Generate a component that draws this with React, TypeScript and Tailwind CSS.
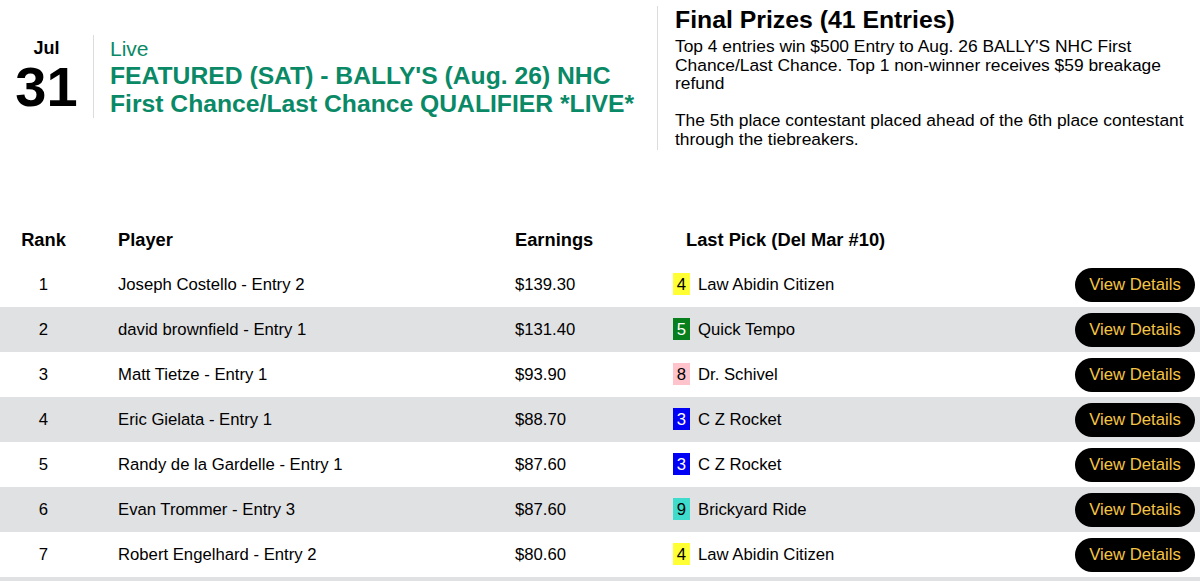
import React from "react";

interface Entry {
  rank: number;
  player: string;
  earnings: string;
  post: number;
  horse: string;
}

const entries: Entry[] = [
  { rank: 1, player: "Joseph Costello - Entry 2", earnings: "$139.30", post: 4, horse: "Law Abidin Citizen" },
  { rank: 2, player: "david brownfield - Entry 1", earnings: "$131.40", post: 5, horse: "Quick Tempo" },
  { rank: 3, player: "Matt Tietze - Entry 1", earnings: "$93.90", post: 8, horse: "Dr. Schivel" },
  { rank: 4, player: "Eric Gielata - Entry 1", earnings: "$88.70", post: 3, horse: "C Z Rocket" },
  { rank: 5, player: "Randy de la Gardelle - Entry 1", earnings: "$87.60", post: 3, horse: "C Z Rocket" },
  { rank: 6, player: "Evan Trommer - Entry 3", earnings: "$87.60", post: 9, horse: "Brickyard Ride" },
  { rank: 7, player: "Robert Engelhard - Entry 2", earnings: "$80.60", post: 4, horse: "Law Abidin Citizen" },
];

// saddle cloth colours by post position
const saddleCloth: Record<number, string> = {
  3: "bg-[#0000f5] text-white",
  4: "bg-[#ffff33] text-black",
  5: "bg-[#067f1c] text-white",
  8: "bg-[#ffc3cc] text-black",
  9: "bg-[#3fdccd] text-black",
};

const Row = ({ entry, striped }: { entry: Entry; striped: boolean }) => (
  <div
    className={`grid grid-cols-[87px_428px_158px_1fr_auto] items-center h-[45px] text-[16.7px] ${
      striped ? "bg-[#e0e1e3]" : "bg-white"
    }`}
  >
    <div className="text-center">{entry.rank}</div>
    <div className="pl-[31px]">{entry.player}</div>
    <div>{entry.earnings}</div>
    <div className="flex items-center">
      <span className={`flex items-center justify-center w-[17px] h-[22px] ${saddleCloth[entry.post]}`}>
        {entry.post}
      </span>
      <span className="ml-[8px]">{entry.horse}</span>
    </div>
    <div className="pr-[5px]">
      <button className="h-[34px] w-[120px] rounded-full bg-black text-[#f7c544] text-[16.7px]">
        View Details
      </button>
    </div>
  </div>
);

export default function App() {
  return (
    <div className="bg-white min-h-screen text-black font-['Liberation_Sans',Arial,sans-serif] pt-[6px] overflow-hidden">
      <div className="flex items-center">
        <div className="flex w-[657px] shrink-0 pb-[4px]">
          <div className="w-[93px] shrink-0 flex flex-col items-center pt-[3px]">
            <div className="text-[18px] leading-[21px] font-bold">Jul</div>
            <div className="text-[56px] leading-[56px] font-bold">31</div>
          </div>
          <div className="border-l border-[#dcdcdc] pl-[16px] pr-[16px] text-[#0a8966]">
            <div className="text-[21px] leading-[27px]">Live</div>
            <div className="text-[24.7px] leading-[28px] font-bold">
              FEATURED (SAT) - BALLY'S (Aug. 26) NHC First Chance/Last Chance QUALIFIER *LIVE*
            </div>
          </div>
        </div>
        <div className="flex-1 border-l border-[#dcdcdc] pl-[17px] pr-[10px] pb-[2px]">
          <h2 className="text-[24.8px] leading-[28px] font-bold">Final Prizes (41 Entries)</h2>
          <p className="mt-[3px] text-[17.4px] leading-[18.5px]">
            Top 4 entries win $500 Entry to Aug. 26 BALLY'S NHC First Chance/Last Chance. Top 1 non-winner
            receives $59 breakage refund
            <br />
            <br />
            The 5th place contestant placed ahead of the 6th place contestant through the tiebreakers.
          </p>
        </div>
      </div>

      <div className="mt-[67px]">
        <div className="grid grid-cols-[87px_428px_158px_1fr_auto] items-center h-[45px] text-[18.3px] font-bold">
          <div className="text-center">Rank</div>
          <div className="pl-[31px]">Player</div>
          <div>Earnings</div>
          <div className="pl-[13px]">Last Pick (Del Mar #10)</div>
          <div />
        </div>
        {entries.map((entry, i) => (
          <Row key={entry.rank} entry={entry} striped={i % 2 === 1} />
        ))}
        <div className="h-[45px] bg-[#e0e1e3]" />
      </div>
    </div>
  );
}
